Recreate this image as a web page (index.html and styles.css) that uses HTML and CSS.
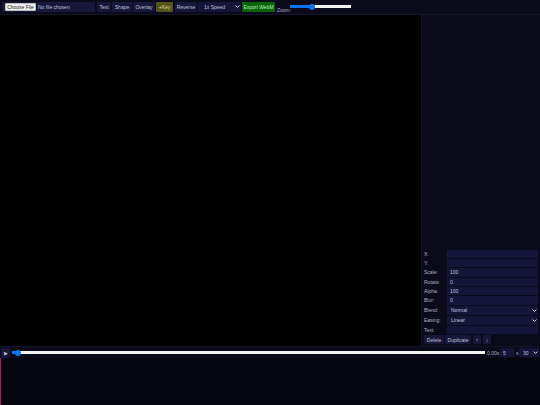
FILE: index.html
```html
<!DOCTYPE html>
<html lang="en">
<head>
<meta charset="utf-8">
<title>Editor</title>
<link rel="stylesheet" href="styles.css">
</head>
<body>
<div class="toolbar">
  <input class="file" type="file">
  <button class="btn w-text">Text</button>
  <button class="btn w-shape">Shape</button>
  <button class="btn w-overlay">Overlay</button>
  <button class="btn w-key key">+Key</button>
  <button class="btn w-reverse">Reverse</button>
  <select class="sel speed"><option>1x Speed</option></select>
  <button class="btn export">Export WebM</button>
  <label class="zoom">Zoom:</label>
  <input class="range zoomr" type="range" min="0" max="100" value="35">
</div>
<div class="main">
  <div class="stage"></div>
  <div class="side">
    <div class="props">
      <div class="row"><label>X:</label><input class="inp" value=""></div>
      <div class="row"><label>Y:</label><input class="inp" value=""></div>
      <div class="row"><label>Scale:</label><input class="inp" value="100"></div>
      <div class="row"><label>Rotate:</label><input class="inp" value="0"></div>
      <div class="row"><label>Alpha:</label><input class="inp" value="100"></div>
      <div class="row"><label>Blur:</label><input class="inp" value="0"></div>
      <div class="row tall"><label>Blend:</label><select class="sel"><option>Normal</option></select></div>
      <div class="row tall"><label>Easing:</label><select class="sel"><option>Linear</option></select></div>
      <div class="row tall"><label>Text:</label><input class="inp" value=""></div>
      <div class="actions">
        <button class="btn w-delete">Delete</button>
        <button class="btn w-dup">Duplicate</button>
        <button class="btn small">↑</button>
        <button class="btn small">↓</button>
      </div>
    </div>
  </div>
</div>
<div class="transport">
  <button class="btn play">▶</button>
  <input class="range seek" type="range" min="0" max="100" step="0.1" value="0.6">
  <span class="time">0.00s</span>
  <input class="inp dur" value="5">
  <span class="unit">s</span>
  <select class="sel fps"><option>30</option></select>
</div>
<div class="timeline"><div class="playhead"></div></div>
</body>
</html>
```
FILE: styles.css
```css
* { box-sizing: border-box; }
html, body { margin: 0; height: 100%; }
body {
  width: 540px;
  height: 405px;
  overflow: hidden;
  background: #000;
  color: #c8c8d8;
  font-family: "Liberation Sans", Arial, sans-serif;
  font-size: 5px;
  display: flex;
  flex-direction: column;
}
button, input, select { font-family: inherit; font-size: 5px; margin: 0; }
.toolbar {
  height: 15px;
  flex: none;
  display: flex;
  align-items: center;
  gap: 1px;
  padding: 0 2px 1px;
  background: #0a0a1a;
  border-bottom: 1px solid #14142a;
}
.btn {
  flex: none;
  height: 10px;
  padding: 0;
  border: 0;
  border-radius: 1px;
  background: #17173a;
  color: #c0c0d8;
}
.w-text { width: 14px; }
.w-shape { width: 20px; }
.w-overlay { width: 22px; }
.w-key { width: 17px; }
.w-reverse { width: 22px; margin-left: 1px; }
.key { background: #55551a; color: #d8d8a0; }
.export { background: #0a640a; color: #b8f0b8; width: 33px; }
.file {
  flex: none;
  width: 93px;
  height: 10px;
  background: #17173a;
  color: #c0c0d8;
  padding: 1px 3px;
  border-radius: 1px;
  margin-right: 1px;
}
.file::file-selector-button {
  font: inherit;
  height: 8px;
  width: 31px;
  padding: 0;
  margin-right: 2px;
  background: #efefef;
  color: #222;
  border: 1px solid #bbb;
  border-radius: 1px;
}
.sel, .inp {
  height: 10px;
  background-color: #15153a;
  color: #c0c0d8;
  border: 0;
  border-radius: 1px;
  padding: 0 3px;
}
.sel {
  appearance: none;
  background-image: url("data:image/svg+xml,%3Csvg xmlns='http://www.w3.org/2000/svg' viewBox='0 0 8 8'%3E%3Cpath d='M1 2.5l3 3 3-3' fill='none' stroke='%23d8d8e8' stroke-width='1.6'/%3E%3C/svg%3E");
  background-repeat: no-repeat;
  background-position: right 1px center;
  background-size: 5px 5px;
}
.speed { flex: none; width: 43px; padding-left: 6px; }
.zoom { flex: none; align-self: flex-end; color: #b0b0c0; margin-left: 1px; width: 12px; }
.range { margin: 0; height: 6px; appearance: none; background: transparent; }
.range::-webkit-slider-runnable-track { height: 3px; background: transparent; border-radius: 2px; }
.range::-webkit-slider-thumb {
  appearance: none;
  width: 6px;
  height: 6px;
  margin-top: -1.5px;
  border-radius: 50%;
  background: #0b74f0;
}
.zoomr {
  flex: none;
  width: 61px;
  background:
    linear-gradient(#0b74f0, #0b74f0) no-repeat 0 50% / 36% 3px,
    linear-gradient(#f2f2f2, #f2f2f2) no-repeat 0 50% / 100% 3px;
}
.seek {
  flex: 1;
  min-width: 0;
  background:
    linear-gradient(#0b74f0, #0b74f0) no-repeat 0 50% / 6px 3px,
    linear-gradient(#f2f2f2, #f2f2f2) no-repeat 0 50% / 100% 3px;
}
.main { flex: 1; display: flex; min-height: 0; }
.stage { flex: 1; background: #000; }
.side {
  width: 119px;
  background: #0a0a1a;
  border-left: 1px solid #14142a;
  display: flex;
  flex-direction: column;
  justify-content: flex-end;
  padding: 0 2px 2px 2px;
}
.props { display: flex; flex-direction: column; }
.row { display: flex; align-items: center; height: 9.3px; flex: none; }
.row.tall { height: 10px; }
.row label { width: 23px; color: #b0b0c0; flex: none; }
.row .inp { flex: 1; height: 8.5px; min-width: 0; }
.row .sel { flex: 1; height: 9px; min-width: 0; padding-left: 4px; }
.actions { display: flex; gap: 1px; }
.actions .btn { height: 9px; }
.w-delete { width: 20px; }
.w-dup { width: 26px; margin-right: 1px; }
.actions .small { width: 8px; margin-right: 1px; }
.transport {
  height: 12px;
  flex: none;
  display: flex;
  align-items: center;
  gap: 2px;
  padding: 0 1px;
  background: #0a0a1a;
  border-top: 1px solid #14142a;
}
.play { width: 9px; height: 10px; }
.time { flex: none; color: #b0b0c0; width: 11px; white-space: nowrap; }
.dur { flex: none; width: 14px; height: 9px; }
.unit { flex: none; width: 2px; margin-right: -1px; color: #b0b0c0; }
.fps { flex: none; width: 20px; height: 9px; padding: 0 2px 0 4px; }
.timeline { height: 47px; flex: none; background: #05050f; }
.playhead { width: 1px; height: 100%; background: #b01a4c; }
```
